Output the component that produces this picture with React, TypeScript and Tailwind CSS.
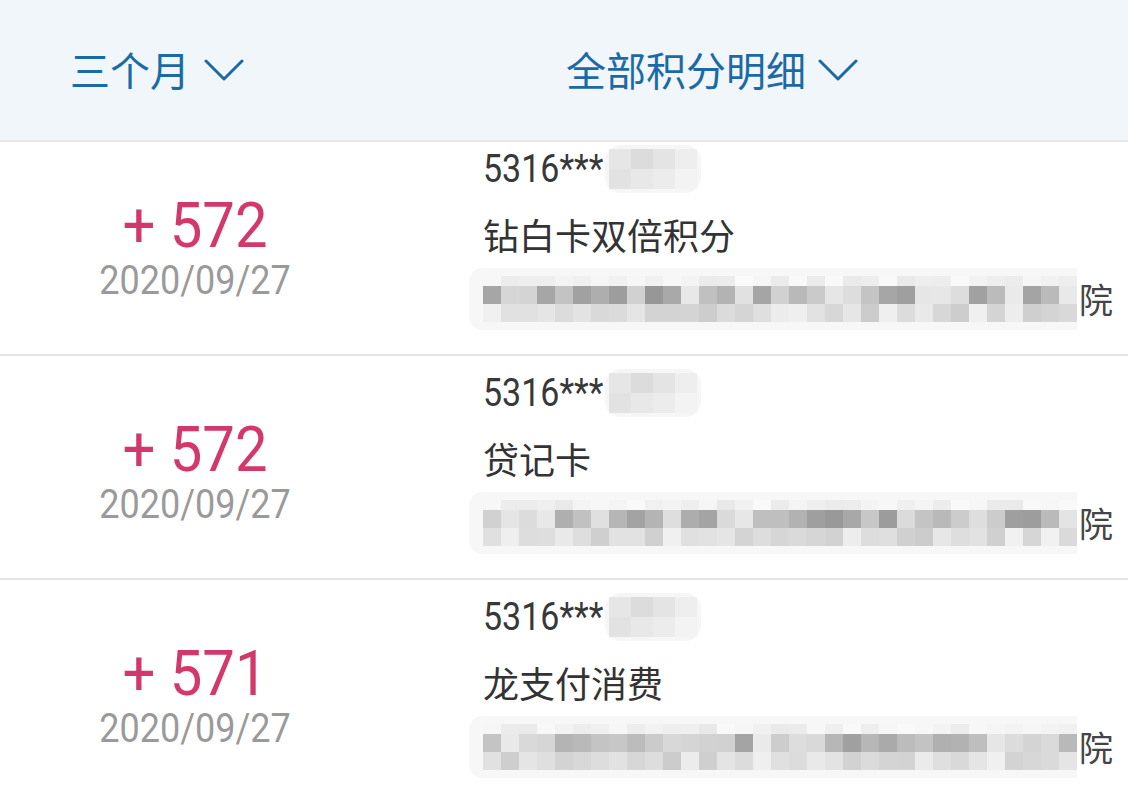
import React from 'react';

interface PointItem {
  id: string;
  amount: string;
  date: string;
  card: string;
  title: string;
  seed: number;
}

const items: PointItem[] = [
  { id: 'a', amount: '572', date: '2020/09/27', card: '5316***', title: '钻白卡双倍积分', seed: 3 },
  { id: 'b', amount: '572', date: '2020/09/27', card: '5316***', title: '贷记卡', seed: 11 },
  { id: 'c', amount: '571', date: '2020/09/27', card: '5316***', title: '龙支付消费', seed: 23 },
];

const cjk = { fontFamily: '"Noto Sans CJK SC", "Noto Sans", sans-serif' };
const roboto = { fontFamily: 'Roboto, "Noto Sans CJK SC", sans-serif' };

// pseudo random grays for the mosaic blur
const shade = (seed: number, i: number, base: number, spread: number) => {
  const x = Math.sin(seed * 97.13 + i * 12.9898) * 43758.5453;
  const r = x - Math.floor(x);
  const v = Math.round(base + r * spread);
  return `rgb(${v},${v},${v})`;
};

const Chevron = ({ className }: { className?: string }) => (
  <svg width="40" height="24" viewBox="0 0 40 24" fill="none" className={className}>
    <polyline points="2 3 20 21 38 3" stroke="currentColor" strokeWidth="3" strokeLinecap="round" strokeLinejoin="round" />
  </svg>
);

const Mosaic = ({ seed }: { seed: number }) => {
  const cols = 33;
  return (
    <div className="flex items-center">
      <div className="flex flex-col rounded-l-[14px] bg-[#f7f7f7] py-[8px] pl-[14px]">
        <div className="flex">
          {Array.from({ length: cols }).map((_, i) => (
            <div key={i} className="h-[10px] w-[18px]" style={{ backgroundColor: shade(seed, i, 232, 18) }} />
          ))}
        </div>
        <div className="flex">
          {Array.from({ length: cols }).map((_, i) => (
            <div key={i} className="h-[18px] w-[18px]" style={{ backgroundColor: shade(seed + 1, i, 150, 85) }} />
          ))}
        </div>
        <div className="flex">
          {Array.from({ length: cols }).map((_, i) => (
            <div key={i} className="h-[18px] w-[18px]" style={{ backgroundColor: shade(seed + 2, i, 204, 38) }} />
          ))}
        </div>
      </div>
      <span className="ml-[2px] text-[34px] text-[#444]" style={cjk}>院</span>
    </div>
  );
};

const Row = ({ item }: { item: PointItem }) => (
  <div className="grid h-[224px] grid-cols-[390px_1fr] border-b-2 border-[#e4e4e4] bg-white">
    <div className="flex flex-col items-center justify-center pt-[20px]">
      <div className="scale-y-[1.1] text-[58px] leading-[55px] text-[#d2386a]" style={roboto}>+ {item.amount}</div>
      <div className="origin-center scale-y-[1.15] text-[36px] leading-[55px] text-[#9a9a9a]" style={roboto}>{item.date}</div>
    </div>
    <div className="flex flex-col pt-[4px] pl-[93px]">
      <div className="flex h-[65px] items-center">
        <span className="scale-y-[1.15] text-[34px] text-[#383838]" style={roboto}>{item.card}</span>
        <div className="ml-[2px] flex flex-col rounded-[16px] bg-[#f6f6f6] px-[4px] py-[4px]">
          <div className="flex">
            <div className="h-[20px] w-[22px] bg-[#e6e6e6]" />
            <div className="h-[20px] w-[22px] bg-[#dcdcdc]" />
            <div className="h-[20px] w-[22px] bg-[#e4e4e4]" />
            <div className="h-[20px] w-[22px] bg-[#eeeeee]" />
          </div>
          <div className="flex">
            <div className="h-[20px] w-[22px] bg-[#e2e2e2]" />
            <div className="h-[20px] w-[22px] bg-[#e8e8e8]" />
            <div className="h-[20px] w-[22px] bg-[#ececec]" />
            <div className="h-[20px] w-[22px] bg-[#f3f3f3]" />
          </div>
        </div>
      </div>
      <div className="flex h-[65px] items-center text-[36px] text-[#333]" style={cjk}>{item.title}</div>
      <div className="-ml-[14px] flex h-[65px] items-center">
        <Mosaic seed={item.seed} />
      </div>
    </div>
  </div>
);

export default function App() {
  return (
    <div className="h-[802px] w-[1128px] overflow-hidden bg-white">
      <div className="relative z-10 flex h-[142px] items-center border-b-2 border-[#e6e6e6] bg-[#f1f6fb] pb-[2px] text-[#1b6aa5]" style={cjk}>
        <div className="flex w-[566px] items-center pl-[70px]">
          <span className="text-[40px]">三个月</span>
          <Chevron className="ml-[14px] mt-[2px]" />
        </div>
        <div className="flex items-center">
          <span className="text-[40px]">全部积分明细</span>
          <Chevron className="ml-[12px] mt-[2px]" />
        </div>
      </div>
      <div className="-mt-[10px]">
        {items.map((item) => (
          <Row key={item.id} item={item} />
        ))}
      </div>
    </div>
  );
}
